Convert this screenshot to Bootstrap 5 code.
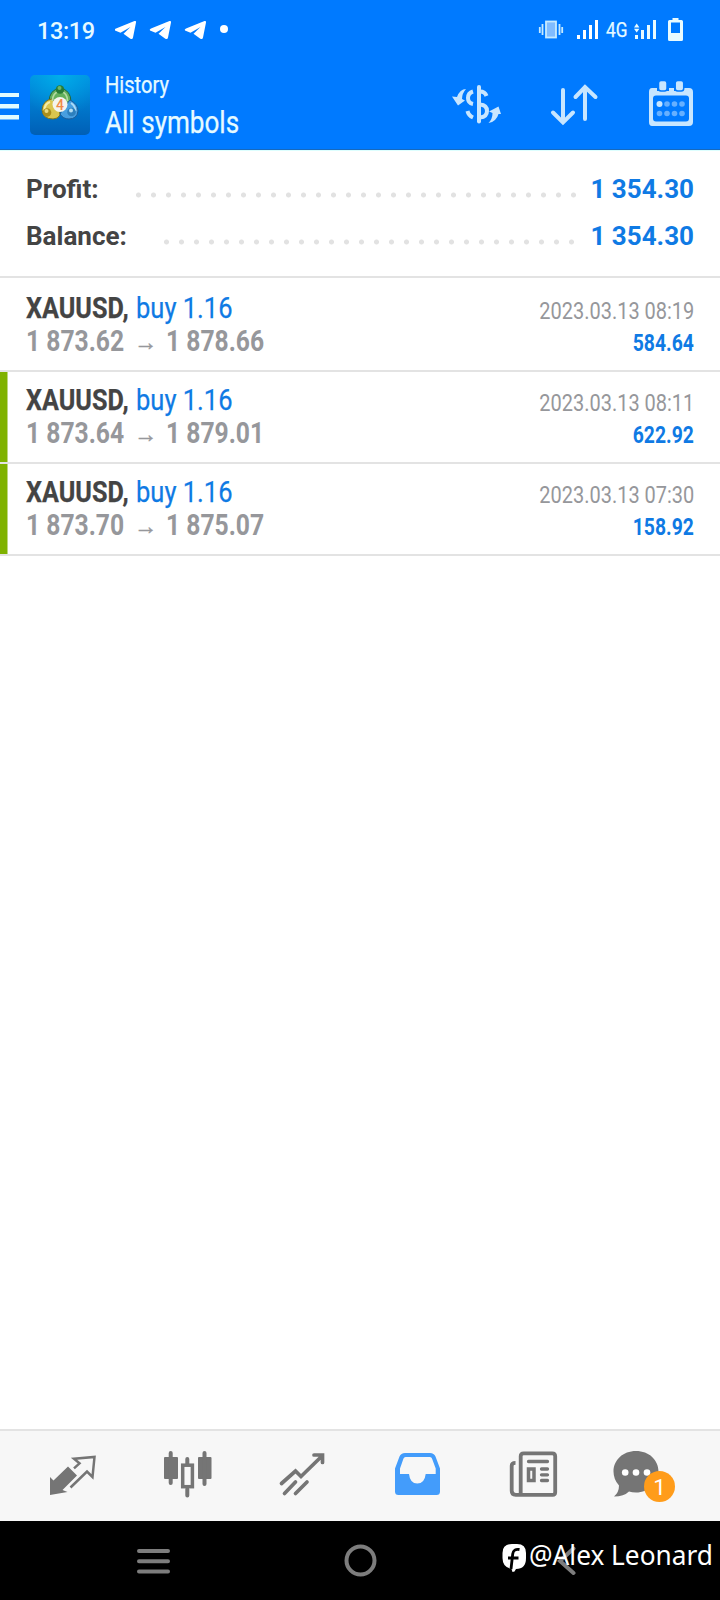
<!DOCTYPE html>
<html lang="en">
<head>
<meta charset="utf-8">
<meta name="viewport" content="width=device-width, initial-scale=1">
<title>History</title>
<link href="https://cdn.jsdelivr.net/npm/bootstrap@5.3.0/dist/css/bootstrap.min.css" rel="stylesheet">
<style>
body{font-family:Roboto,"Liberation Sans",sans-serif;background:#fff;color:#444}
.screen{width:720px;height:1600px;overflow:hidden}
svg{display:block;flex:none}
.topbar{background:#007aff;height:150px;border-bottom:1px solid #1769bd;color:#e6faff}
.status{height:60px}
.clock{font-size:23.5px;line-height:28px;padding:17px 0 0 37px;width:115px;letter-spacing:-.4px;font-weight:500}
.net{font-size:20.5px;line-height:24px;width:28px;padding-top:18px}
.cnd{display:inline-block;white-space:nowrap;transform:scaleX(.84);transform-origin:0 50%;-webkit-text-stroke:.25px currentColor}
.cnd-end{transform:scaleX(.832);transform-origin:100% 50%;-webkit-text-stroke:0}
.titles{width:330px;padding-left:15px}
.t1{font-size:24.5px;line-height:30px;margin-top:10px}
.t1 .cnd{transform:scaleX(.82)}
.t2{font-size:32px;line-height:38px;margin-top:3px}
.t2 .cnd{transform:scaleX(.815)}
.summary{height:128px;padding:14px 26px 0;border-bottom:2px solid #e3e3e3;border-top:1px solid #dff;font-size:26px;font-weight:700}
.sumrow{height:47px;line-height:46px}
.blue{color:#0f7ae4}
.dots{height:6px;margin-top:12px;background:radial-gradient(circle at 50% 50%,#e2e2e2 2.1px,transparent 2.9px) right 0 top 0/15px 6px repeat-x}
.d1{width:450px;margin-right:9.5px}
.d2{width:420px;margin-right:11.5px}
.deal{height:92px;border-bottom:2px solid #e3e3e3;padding:0 26px}
.deal-first{height:94px;padding-top:2px}
.closed{box-shadow:inset 7.5px 0 #7fb200}
.sym{font-size:30px;line-height:32px;padding-top:12px;height:45px}
.sym b{width:110px}
.sym .blue{transform:scaleX(.85)}
.prices{font-size:30px;line-height:32px;font-weight:700;color:#96979b}
.prices .cnd{transform:scaleX(.822);-webkit-text-stroke:0}
.p-open{width:109px}
.arr{font:400 23px/34px "Liberation Sans",sans-serif;height:32px;width:31px;text-indent:-1px;-webkit-text-stroke:.5px currentColor}
.date{font-size:24px;line-height:30px;color:#96979b;padding-top:16px;height:46px}
.sum{font-size:24px;line-height:30px;font-weight:700;padding-top:2px}
.sum .cnd{transform:scaleX(.805)}
.tabs{height:92px;background:#f7f7f7;border-top:2px solid #e3e3e3;padding-left:15px}
.sysnav{height:79px;background:#000}
.count{left:54px;top:40px;width:31px;height:31px;border-radius:50%;background:#ff9c1a;color:#fff;font-size:22.5px;line-height:32px}
.credit{left:529px;top:17px;font:400 27px/34px "Noto Sans",sans-serif;color:#fff;white-space:nowrap;transform:scaleX(.972);transform-origin:0 50%}
</style>
</head>
<body>
<div class="screen d-flex flex-column">
<header class="topbar">
  <div class="status d-flex">
    <div class="clock">13:19</div>
    <svg width="491" height="60" viewBox="115 0 491 60" fill="#fff">
      <g id="tg"><path d="M115 30.5Q114 29.5 116 28.5L134.500 21Q136.500 20.500 136 22.500L133 37.500Q132.500 40 130 38.500L123.500 33.700L130.500 27L120.500 32.700Z"/></g>
      <use href="#tg" x="35"/><use href="#tg" x="70"/>
      <circle cx="224" cy="29" r="4"/>
      <g fill="none" stroke="#c6eaff" stroke-width="1.8"><rect x="546" y="21.500" width="10" height="16" fill="#80bcff"/><path d="M542.500 24v11M539.800 27v6M559.500 24v11M562.200 27v6"/></g>
      <path d="M577 35h3v4h-3zM583 30h3v9h-3zM589 25h3v14h-3zM595 20h3v19h-3z"/>
    </svg>
    <div class="net"><span class="cnd">4G</span></div>
    <svg width="86" height="60" viewBox="634 0 86 60" fill="#e9fbff"><path d="M635 35h3v4h-3zM641 30h3v9h-3zM647 25h3v14h-3zM653 20h3v19h-3zM634 27.500l2.700-4 2.700 4zM634 28.800h5.400l-2.700 3.800z"/><path fill-rule="evenodd" d="M669.500 20h3v-2h6v2h3q1.500 0 1.500 1.500v18q0 1.500-1.500 1.500h-12q-1.500 0-1.500-1.500v-18q0-1.500 1.500-1.500zM671 22.500v10.500h9V22.500z"/></svg>
  </div>
  <div class="d-flex">
    <svg width="90" height="89" viewBox="0 60 90 89">
      <defs><linearGradient id="bg" x2="0" y2="1"><stop stop-color="#0093e4"/><stop offset="1" stop-color="#005fb6"/></linearGradient>
      <radialGradient id="sh" cx=".5" cy="0" r=".7"><stop stop-color="#00aeea"/><stop offset="1" stop-color="#00a0e0" stop-opacity="0"/></radialGradient></defs>
      <path d="M0 93h19v4H0zM0 104h19v4.500H0zM0 115h19v4.500H0z" fill="#e2fbff"/>
      <rect x="30" y="75" width="60" height="60" rx="5" fill="url(#bg)"/><rect x="30" y="75" width="60" height="60" rx="5" fill="url(#sh)"/>
      <g stroke-width="1">
        <path d="M60 88q11 2 11 14l-5 7h-12l-5-7q0-12 11-14z" fill="#62b05c" stroke="#22663c"/>
        <path d="M52 99q-9 1-10 11 1 9 11 9 5 0 7-4l-1-9z" fill="#dac64e" stroke="#7c741f"/>
        <path d="M70 100q8 4 8 11-1 8-9 8-6 0-9-5l5-8z" fill="#489fe0" stroke="#1c5c99"/>
      </g>
      <path d="M52.500 101q0-8 7.500-10.500 7.500 2.500 7.500 10.500" fill="none" stroke="#b4dba2" stroke-width="1.800"/>
      <path d="M50 102q-5.500 2-5.500 8" fill="none" stroke="#f5eda8" stroke-width="2"/>
      <path d="M71 103q4.500 3 4.500 8" fill="none" stroke="#aedbf6" stroke-width="1.800"/>
      <circle cx="60" cy="89.500" r="4.300" fill="#267c37"/><circle cx="59.500" cy="88" r="2" fill="#6fb765"/>
      <circle cx="47" cy="112.500" r="4.300" fill="#a98e1d"/><circle cx="46.500" cy="111" r="2" fill="#eadc81"/>
      <circle cx="71.500" cy="112" r="4.300" fill="#2c7fbd"/><circle cx="71" cy="110.500" r="2" fill="#b3def3"/>
      <circle cx="60" cy="104.500" r="7.500" fill="#f4f4ee"/>
      <text x="60" y="109.500" font-family="Roboto,sans-serif" font-size="14" font-weight="500" text-anchor="middle" fill="#f08a48">4</text>
    </svg>
    <div class="titles"><div class="t1"><span class="cnd">History</span></div><div class="t2"><span class="cnd">All symbols</span></div></div>
    <svg width="300" height="89" viewBox="420 60 300 89" fill="none" stroke="#c8e6ff" stroke-width="4">
      <path d="M479 87V121.500" stroke-linecap="round"/>
      <path d="M473 91.500q-5 1.500-5 6.500t5 6M480 91.500q5 0 6.500 4.500M467.500 111q1 4.500 5.500 6.500M480 104.500q7 .5 7 6.500t-7 6.500"/>
      <path d="M466 89q-6 0-9 8l-5-.5 6 9 7-5-3-1.500q0-5.500 4-10zM488.500 123q8-1.500 10-9h2.500l-2.500-7.500-9.500 5 3.500 1.500q0 6-4 10z" fill="#c8e6ff" stroke="none"/>
      <path d="M563 90v32M553 112.500l10 10 10-10M585 119V87M575.500 97L585 87l10.500 10" stroke-linecap="round" stroke-linejoin="miter"/>
      <path fill="#c8e6ff" stroke="none" fill-rule="evenodd" d="M652 88h5v3h12v-3h5v3h7v-3h8q4 0 4 4v30q0 4-4 4h-37q-3 0-3-4V92q0-4 3-4zM656 95.500q-3 0-3 3v20q0 3 3 3h30q3 0 3-3v-20q0-3-3-3z"/>
      <g fill="#c8e6ff" stroke="#007aff" stroke-width="1.500"><rect x="658.500" y="80.500" width="8.500" height="10.500" rx="2.500"/><rect x="675.200" y="80.500" width="8.500" height="10.500" rx="2.500"/></g>
      <g fill="#66b0ff" stroke="none"><circle cx="659.500" cy="104" r="3" fill="#c8e6ff"/><circle cx="667" cy="104" r="2.800"/><circle cx="674.500" cy="104" r="2.800"/><circle cx="682" cy="104" r="2.800"/><circle cx="659.500" cy="113.500" r="2.800"/><circle cx="667" cy="113.500" r="2.800"/><circle cx="674.500" cy="113.500" r="2.800"/><circle cx="682" cy="113.500" r="2.800"/></g>
    </svg>
  </div>
</header>
<section class="summary">
  <div class="sumrow d-flex align-items-center"><span>Profit:</span><div class="dots d1 ms-auto"></div><span class="blue">1 354.30</span></div>
  <div class="sumrow d-flex align-items-center"><span>Balance:</span><div class="dots d2 ms-auto"></div><span class="blue">1 354.30</span></div>
</section>
<main class="flex-grow-1">
  <div class="deal deal-first d-flex justify-content-between">
    <div><div class="sym d-flex"><b class="cnd">XAUUSD,</b><span class="cnd blue">buy 1.16</span></div><div class="prices d-flex"><span class="cnd p-open">1 873.62</span><span class="arr">→</span><span class="cnd">1 878.66</span></div></div>
    <div class="text-end"><div class="date"><span class="cnd cnd-end">2023.03.13 08:19</span></div><div class="sum blue"><span class="cnd cnd-end">584.64</span></div></div>
  </div>
  <div class="deal closed d-flex justify-content-between">
    <div><div class="sym d-flex"><b class="cnd">XAUUSD,</b><span class="cnd blue">buy 1.16</span></div><div class="prices d-flex"><span class="cnd p-open">1 873.64</span><span class="arr">→</span><span class="cnd">1 879.01</span></div></div>
    <div class="text-end"><div class="date"><span class="cnd cnd-end">2023.03.13 08:11</span></div><div class="sum blue"><span class="cnd cnd-end">622.92</span></div></div>
  </div>
  <div class="deal closed d-flex justify-content-between">
    <div><div class="sym d-flex"><b class="cnd">XAUUSD,</b><span class="cnd blue">buy 1.16</span></div><div class="prices d-flex"><span class="cnd p-open">1 873.70</span><span class="arr">→</span><span class="cnd">1 875.07</span></div></div>
    <div class="text-end"><div class="date"><span class="cnd cnd-end">2023.03.13 07:30</span></div><div class="sum blue"><span class="cnd cnd-end">158.92</span></div></div>
  </div>
</main>
<nav class="tabs d-flex">
  <svg width="115" height="90" viewBox="15 1431 115 90"><path fill="#757575" d="M50 1477l3.500 3.500 14.500-14 9 9-14.500 14.500 5 2-17.500 3z"/><path d="M70.500 1487.500L87 1471.500l5.500 5.500 2-20-20.500 1.800 5.500 4.500-5.500 5" fill="none" stroke="#757575" stroke-width="2.500"/></svg>
  <svg width="115" height="90" viewBox="130 1431 115 90"><g fill="#757575"><rect x="164" y="1457" width="14" height="22" rx="1"/><rect x="198" y="1457" width="13.500" height="22" rx="1"/></g><path d="M170.700 1453v30M204.500 1453v31M187.300 1459v5M187.300 1489v6.500" stroke="#757575" stroke-width="4" stroke-linecap="round"/><rect x="182.700" y="1465.200" width="9.700" height="21.500" fill="none" stroke="#757575" stroke-width="3.500"/></svg>
  <svg width="115" height="90" viewBox="245 1431 115 90"><path d="M281.500 1483.500l14-12.500 5.500 5.500 21-20.500M314 1455h8.500v7.500M284.500 1493.500l11-11.500M295.500 1493.500l11.500-11.500" fill="none" stroke="#757575" stroke-width="3.700" stroke-linecap="round" stroke-linejoin="miter"/></svg>
  <svg width="115" height="90" viewBox="360 1431 115 90"><path fill="#439cfb" fill-rule="evenodd" d="M405 1453h25q4 0 5.500 3.500l4.500 12v23q0 3.500-3.500 3.500h-38q-3.500 0-3.500-3.500v-23l4.500-12q1.500-3.500 5.500-3.500zM405.500 1457q-1.500 0-2 1.500l-3.500 10v5.500h9q1 9.500 8.300 9.500t8.400-9.500h10v-5.500l-3.700-10q-.5-1.500-2-1.500z"/></svg>
  <svg width="115" height="90" viewBox="475 1431 115 90"><g fill="none" stroke="#757575" stroke-width="3.800"><path d="M515.500 1462.800q-3.800 0-3.800 3v25q0 4 4 4h37q2.500 0 2.500-2.500v-36q0-3-3-3h-28.500q-3 0-3 3v38"/><path d="M528.500 1461.500h19M541.500 1469h6M541.500 1474.800h6M541.500 1480.500h6" stroke-width="3.300" stroke-linecap="round"/><rect x="528.500" y="1469" width="5.500" height="11.500" stroke-width="3.500"/></g></svg>
  <div class="position-relative">
    <svg width="115" height="90" viewBox="590 1431 115 90"><path fill="#757575" d="M636 1451c13 0 22.500 9 22.500 20.500s-9.500 21-22.500 21q-4 0-7-1-5 5-15 5 5-4 5-11-5.500-6-5.500-14c0-11.500 9.500-20.500 22.500-20.500z"/><g fill="#fff"><circle cx="625.200" cy="1472.500" r="3.300"/><circle cx="636" cy="1472.500" r="3.300"/><circle cx="647" cy="1472.500" r="3.300"/></g></svg>
    <div class="count position-absolute text-center">1</div>
  </div>
</nav>
<footer class="sysnav position-relative">
  <svg width="720" height="79" viewBox="0 1521 720 79" fill="none" stroke="#7d7d7d" stroke-width="4" stroke-linecap="round"><path d="M139 1551h29M139 1561.200h29M139 1571.500h29M573.500 1548.500l-13.500 12.500 13.500 12"/><circle cx="360.500" cy="1560.500" r="14"/>
  <path d="M512 1544h5q9 0 9 9v5q0 11-10 11l-1.500 2.500-2 .5-1-3q-9-2-9-11v-5q0-9 9.500-9z" fill="#fff" stroke="none"/><path d="M519.500 1549.500q-6-1-6.800 4.500l-1.700 15M508 1558h10.500" stroke="#000" stroke-width="2.800" stroke-linecap="butt"/></svg>
  <div class="credit position-absolute">@Alex Leonard</div>
</footer>
</div>
<script src="https://cdn.jsdelivr.net/npm/bootstrap@5.3.0/dist/js/bootstrap.bundle.min.js"></script>
</body>
</html>
